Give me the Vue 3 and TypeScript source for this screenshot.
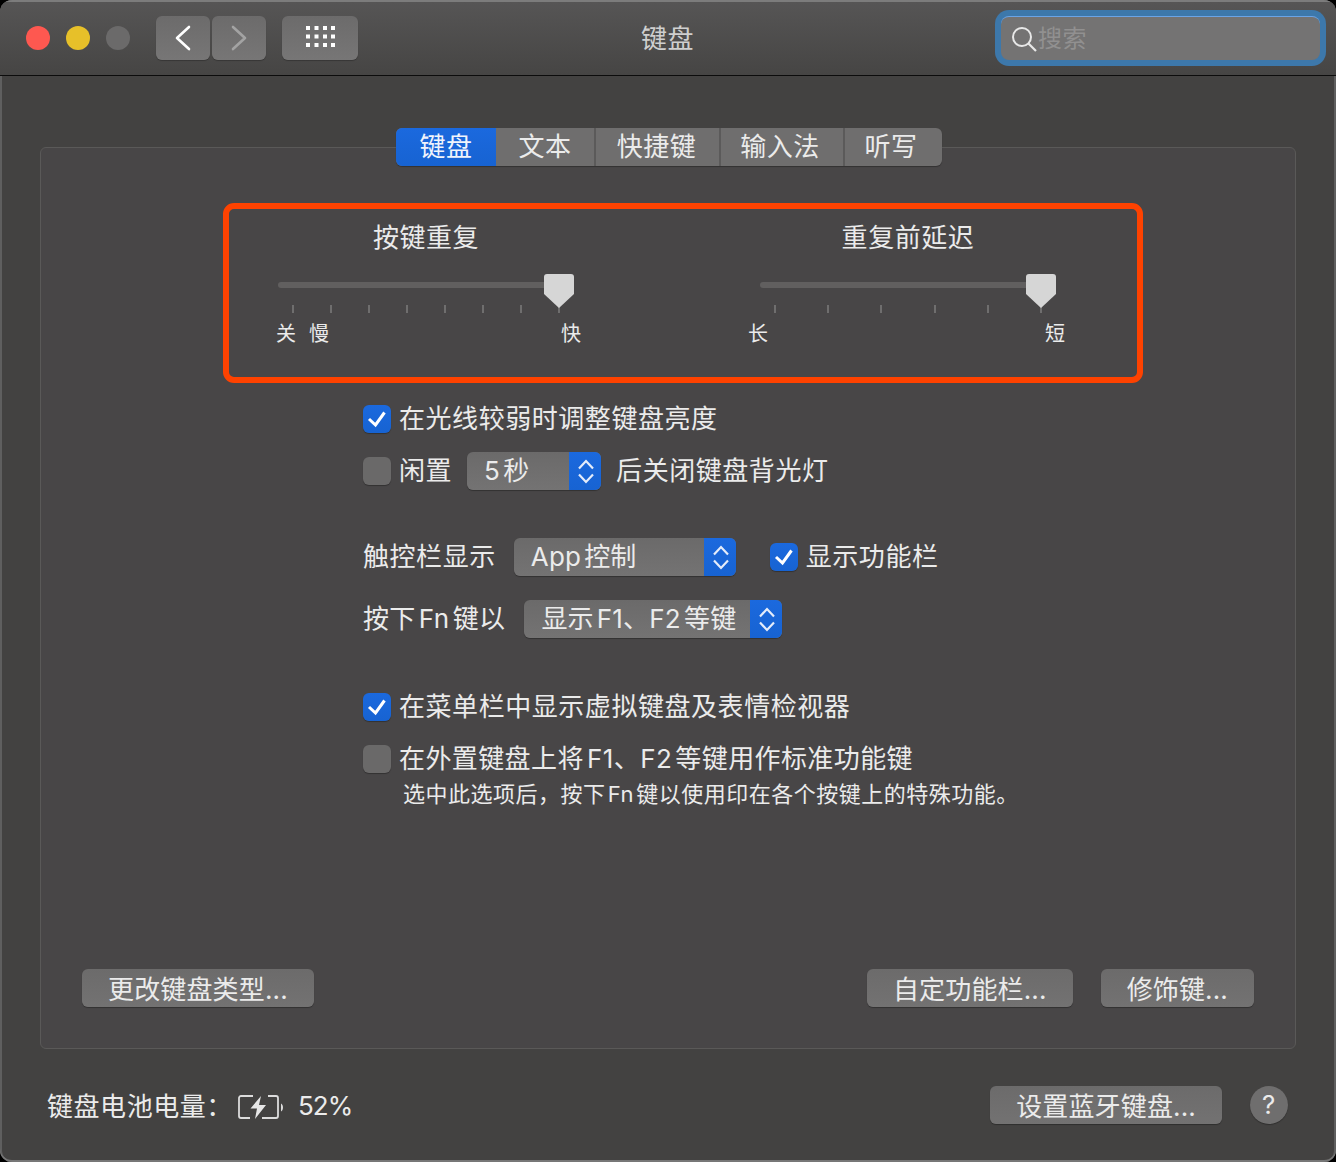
<template>
  <div class="window">
    <header class="titlebar">
      <div class="lights">
        <span class="light red"></span>
        <span class="light yellow"></span>
        <span class="light grey"></span>
      </div>
      <div class="nav">
        <button class="tool-btn nav-btn">
          <svg width="54" height="44" viewBox="0 0 54 44"><path d="M33 11 21 22l12 11" fill="none" stroke="#fff" stroke-width="2.6" stroke-linecap="round" stroke-linejoin="round" /></svg>
        </button>
        <button class="tool-btn nav-btn">
          <svg width="54" height="44" viewBox="0 0 54 44"><path d="M21 11 33 22 21 33" fill="none" stroke="#a3a3a3" stroke-width="2.6" stroke-linecap="round" stroke-linejoin="round" /></svg>
        </button>
      </div>
      <button class="tool-btn grid-btn">
        <svg width="76" height="44" viewBox="0 0 76 44">
          <g v-for="y in [10, 18.5, 27]" :key="y">
            <rect v-for="x in [24, 32.5, 41, 49]" :key="x" :x="x" :y="y" width="4" height="4" fill="#fff" />
          </g>
        </svg>
      </button>
      <div class="win-title">键盘</div>
      <div class="search">
        <svg class="search-icon" width="26" height="26" viewBox="0 0 26 26">
          <circle cx="11" cy="11" r="9" fill="none" stroke="#e8e8e8" stroke-width="2" />
          <path d="M17.5 17.5 25 25" stroke="#e8e8e8" stroke-width="2.2" />
        </svg>
        <span class="search-text">搜索</span>
      </div>
    </header>

    <main class="content">
      <section class="panel">
        <div class="tabs">
          <div
            v-for="(tab, i) in tabs"
            :key="tab.label"
            class="tab"
            :class="{ active: i === 0 }"
            :style="{ width: tab.width + 'px' }"
          >{{ tab.label }}</div>
        </div>

        <div class="highlight">
          <div class="slider slider-left">
            <div class="slider-title">按键重复</div>
            <div class="track-wrap">
              <div class="track"></div>
              <svg class="thumb" width="30" height="34" viewBox="0 0 30 34">
                <path d="M3 0h24a3 3 0 0 1 3 3v17L15 34 0 20V3a3 3 0 0 1 3-3z" fill="#d6d6d6" />
              </svg>
            </div>
            <div class="ticks"><i v-for="n in 8" :key="n"></i></div>
            <div class="marks marks-left">
              <span>关</span><span class="slow">慢</span><span class="end">快</span>
            </div>
          </div>
          <div class="slider slider-right">
            <div class="slider-title">重复前延迟</div>
            <div class="track-wrap">
              <div class="track"></div>
              <svg class="thumb" width="30" height="34" viewBox="0 0 30 34">
                <path d="M3 0h24a3 3 0 0 1 3 3v17L15 34 0 20V3a3 3 0 0 1 3-3z" fill="#d6d6d6" />
              </svg>
            </div>
            <div class="ticks"><i v-for="n in 6" :key="n"></i></div>
            <div class="marks marks-right">
              <span>长</span><span class="end">短</span>
            </div>
          </div>
        </div>

        <div class="options">
          <div class="row row-1">
            <span class="check on"><svg width="28" height="28" viewBox="0 0 28 28"><path d="M6 14 12.500 20 21.500 7.500" fill="none" stroke="#fff" stroke-width="3" /></svg></span>
            <span class="label">在光线较弱时调整键盘亮度</span>
          </div>
          <div class="row row-2">
            <span class="check"></span>
            <span class="label">闲置</span>
            <div class="select select-idle">
              <span class="select-value">5 秒</span>
              <span class="stepper"><svg width="32" height="38" viewBox="0 0 32 38"><path d="M10 16.500 17 9l7 7.500M10 22.500l7 7.500 7-7.500" fill="none" stroke="#e4ecfa" stroke-width="2.2" /></svg></span>
            </div>
            <span class="label">后关闭键盘背光灯</span>
          </div>
          <div class="row row-3">
            <span class="label">触控栏显示</span>
            <div class="select select-app">
              <span class="select-value">App 控制</span>
              <span class="stepper"><svg width="32" height="38" viewBox="0 0 32 38"><path d="M10 16.500 17 9l7 7.500M10 22.500l7 7.500 7-7.500" fill="none" stroke="#e4ecfa" stroke-width="2.2" /></svg></span>
            </div>
            <span class="check on bar-check"><svg width="28" height="28" viewBox="0 0 28 28"><path d="M6 14 12.500 20 21.500 7.500" fill="none" stroke="#fff" stroke-width="3" /></svg></span>
            <span class="label">显示功能栏</span>
          </div>
          <div class="row row-4">
            <span class="label">按下 Fn 键以</span>
            <div class="select select-fn">
              <span class="select-value">显示 F1、F2 等键</span>
              <span class="stepper"><svg width="32" height="38" viewBox="0 0 32 38"><path d="M10 16.500 17 9l7 7.500M10 22.500l7 7.500 7-7.500" fill="none" stroke="#e4ecfa" stroke-width="2.2" /></svg></span>
            </div>
          </div>
          <div class="row row-5">
            <span class="check on"><svg width="28" height="28" viewBox="0 0 28 28"><path d="M6 14 12.500 20 21.500 7.500" fill="none" stroke="#fff" stroke-width="3" /></svg></span>
            <span class="label">在菜单栏中显示虚拟键盘及表情检视器</span>
          </div>
          <div class="row row-6">
            <span class="check"></span>
            <span class="label">在外置键盘上将 F1、F2 等键用作标准功能键</span>
          </div>
          <div class="hint">选中此选项后，按下 Fn 键以使用印在各个按键上的特殊功能。</div>
        </div>

        <div class="panel-actions">
          <button class="btn">更改键盘类型...</button>
          <button class="btn push">自定功能栏...</button>
          <button class="btn">修饰键...</button>
        </div>
      </section>

      <footer class="footer">
        <span class="battery-label">键盘电池电量：</span>
        <svg class="battery" width="46" height="28" viewBox="0 -3 46 28">
          <path d="M15 2H3a2 2 0 0 0-2 2v18a2 2 0 0 0 2 2h9M30 2h8a2 2 0 0 1 2 2v18a2 2 0 0 1-2 2H24" fill="none" stroke="#dcdcdc" stroke-width="1.800" />
          <path d="M23 2 12.500 14.500h6.500L17 25 28 11h-7z" fill="#e6e6e6" />
          <path d="M43 9.500c1.500 1 2 2.300 2 4s-.5 3-2 4z" fill="#dcdcdc" />
        </svg>
        <span class="percent">52%</span>
        <button class="btn push">设置蓝牙键盘...</button>
        <button class="help">?</button>
      </footer>
    </main>
  </div>
</template>

<script setup lang="ts">
interface Tab {
  label: string
  width: number
}

const tabs: Tab[] = [
  { label: '键盘', width: 100 },
  { label: '文本', width: 100 },
  { label: '快捷键', width: 125 },
  { label: '输入法', width: 124 },
  { label: '听写', width: 97 }
]
</script>

<style>
html,
body {
  margin: 0;
  background: #000;
}
</style>

<style scoped>
.window {
  width: 1336px;
  height: 1162px;
  box-sizing: border-box;
  display: flex;
  flex-direction: column;
  overflow: hidden;
  border-radius: 12px;
  background: #434241;
  color: #ebebeb;
  font-family: Inter, "Noto Sans CJK SC", sans-serif;
  font-size: 26px;
  letter-spacing: 0.55px;
  word-spacing: -4.5px;
  box-shadow: inset 0 -2px 0 #777, inset 2px 0 0 #5f5f5f, inset -2px 0 0 #5f5f5f;
}

button {
  font: inherit;
  letter-spacing: inherit;
  word-spacing: inherit;
  color: inherit;
  border: none;
  padding: 0;
}

.titlebar {
  height: 76px;
  flex: none;
  box-sizing: border-box;
  display: flex;
  align-items: center;
  position: relative;
  padding-left: 26px;
  background: linear-gradient(#565555, #464544);
  border-top: 2px solid #7c7c7c;
  border-bottom: 1px solid #0c0c0c;
  padding-bottom: 1px;
}

.lights {
  display: flex;
  gap: 16px;
}

.light {
  width: 24px;
  height: 24px;
  border-radius: 50%;
}

.red { background: #fe5850; }
.yellow { background: #e7c029; }
.grey { background: #6b6a6a; }

.nav {
  display: flex;
  gap: 2px;
  margin-left: 26px;
}

.tool-btn {
  display: block;
  height: 44px;
  border-radius: 6px;
  background: linear-gradient(#6c6b6b, #777676);
  box-shadow: 0 1px 1px rgba(0, 0, 0, 0.25);
}

.tool-btn svg {
  display: block;
}

.nav-btn { width: 54px; }

.grid-btn {
  width: 76px;
  margin-left: 16px;
}

.win-title {
  position: absolute;
  left: 641px;
  top: 18px;
  line-height: 38px;
  color: #cfcfcf;
}

.search {
  display: flex;
  align-items: center;
  box-sizing: border-box;
  width: 319px;
  height: 44px;
  margin-left: auto;
  margin-right: 16px;
  padding-left: 10px;
  border-radius: 8px;
  background: #747373;
  border-top: 1px solid #6ba4e6;
  box-shadow: 0 0 0 6px #3d78ab;
}

.search-icon {
  flex: none;
}

.search-text {
  margin-left: 1px;
  padding-bottom: 4px;
  font-size: 24px;
  color: #919090;
}

.content {
  flex: 1;
  display: flex;
  flex-direction: column;
  padding: 71px 40px 0;
}

.panel {
  height: 902px;
  box-sizing: border-box;
  display: flex;
  flex-direction: column;
  padding: 0 41px 41px;
  border: 1px solid #5a5958;
  border-radius: 6px;
  background: #484647;
}

.tabs {
  display: flex;
  align-self: flex-start;
  height: 38px;
  margin: -20px 0 0 314px;
  overflow: hidden;
  border-radius: 6px;
  background: #6f6e6e;
  box-shadow: 0 1px 1px rgba(0, 0, 0, 0.3);
}

.tab {
  box-sizing: border-box;
  line-height: 37px;
  text-align: center;
  border-right: 2px solid #5b5a5a;
}

.tab:nth-child(3) {
  padding-right: 2px;
}

.tab:nth-child(4) {
  padding-right: 4px;
}

.tab:last-child {
  padding-right: 5px;
  border-right: none;
}

.tab.active {
  border-right: none;
  background: linear-gradient(#1b69de, #1763d2);
  color: #f0f4fc;
}

.highlight {
  display: flex;
  box-sizing: border-box;
  width: 920px;
  height: 180px;
  margin: 37px 0 0 141px;
  border: 6px solid #fe4200;
  border-radius: 11px;
}

.slider {
  width: 296px;
  padding-top: 14px;
}

.slider-left { margin-left: 49px; }
.slider-right { margin-left: 186px; }

.slider-title {
  line-height: 30px;
  text-align: center;
}

.track-wrap {
  position: relative;
  height: 31px;
  margin-top: 21px;
}

.track {
  width: 284px;
  height: 6px;
  position: relative;
  top: 8px;
  border-radius: 3px;
  background: #615f5f;
}

.thumb {
  position: absolute;
  right: 0;
  top: 0;
  z-index: 1;
}

.ticks {
  display: flex;
  justify-content: space-between;
  height: 8px;
  padding: 0 14px;
}

.ticks i {
  width: 2px;
  background: #6f6e6e;
}

.marks {
  display: flex;
  margin-top: 11px;
  font-size: 20px;
  line-height: 20px;
  letter-spacing: 0;
}

.marks-left {
  width: 305px;
  margin-left: -2px;
}

.marks-right {
  width: 317px;
  margin-left: -12px;
}

.slow { margin-left: 13px; }
.end { margin-left: auto; }

.options {
  margin-left: 281px;
}

.row {
  display: flex;
  align-items: center;
  gap: 15px;
  height: 38px;
  line-height: 38px;
}

.row-1 { height: 28px; margin-top: 22px; }
.row-2 { margin-top: 19px; }
.row-3 { margin-top: 48px; gap: 18px; }
.row-4 { margin-top: 24px; gap: 19px; }
.row-5 { height: 28px; margin-top: 55px; }
.row-6 { height: 28px; margin-top: 24px; letter-spacing: 0.4px; }

.row-4 .label {
  letter-spacing: 0.35px;
}

.row-1,
.row-5,
.row-6 {
  gap: 8px;
}

.row-2 .check {
  margin-right: -7px;
}

.check {
  flex: none;
  width: 28px;
  height: 28px;
  border-radius: 6px;
  background: #6a6969;
  box-shadow: 0 1px 1px rgba(0, 0, 0, 0.3);
}

.check svg {
  display: block;
}

.check.on {
  background: linear-gradient(#1b69de, #1763d2);
}

.bar-check {
  margin-left: 16px;
  margin-right: -10px;
}

.select {
  flex: none;
  display: flex;
  box-sizing: border-box;
  height: 38px;
  overflow: hidden;
  padding-left: 17px;
  border-radius: 6px;
  background: linear-gradient(#6b6a6a, #747373);
  box-shadow: 0 1px 1px rgba(0, 0, 0, 0.3);
}

.select-idle { width: 134px; }
.select-app { width: 222px; }
.select-fn { width: 258px; }

.select-value {
  flex: 1;
  letter-spacing: 0.2px;
  word-spacing: -4.5px;
  white-space: nowrap;
}

.stepper {
  flex: none;
  width: 32px;
  background: linear-gradient(#1b69de, #1763d2);
}

.stepper svg {
  display: block;
}

.hint {
  margin: 6px 0 0 40px;
  font-size: 22px;
  line-height: 30px;
  letter-spacing: 0.5px;
  white-space: nowrap;
}

.panel-actions {
  display: flex;
  gap: 28px;
  margin-top: auto;
}

.btn {
  height: 38px;
  padding: 0 26px 8px;
  border-radius: 6px;
  background: linear-gradient(#6c6b6b, #737272);
  box-shadow: 0 1px 1px rgba(0, 0, 0, 0.3);
  letter-spacing: 0.15px;
  white-space: nowrap;
}

.push {
  margin-left: auto;
}

.footer {
  display: flex;
  align-items: center;
  height: 38px;
  margin: 37px 8px 0 7px;
}

.battery-label {
  width: 191px;
  padding-bottom: 2px;
  white-space: nowrap;
}

.battery {
  flex: none;
}

.percent {
  margin-left: 14px;
  letter-spacing: -1px;
}

.help {
  width: 38px;
  height: 38px;
  margin-left: 28px;
  border-radius: 50%;
  background: #6f6e6e;
  box-shadow: 0 1px 1px rgba(0, 0, 0, 0.3);
  line-height: 38px;
  text-align: center;
}
</style>
